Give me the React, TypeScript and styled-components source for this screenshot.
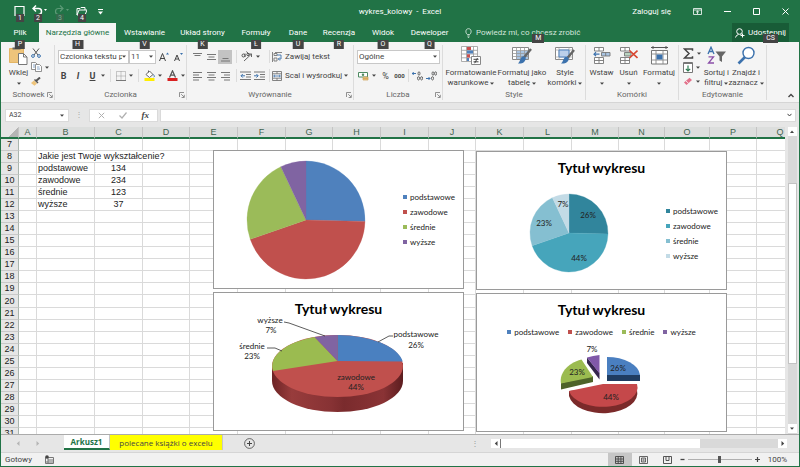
import React from "react";
import styled, { createGlobalStyle, css } from "styled-components";

const UI = 'Roboto, "Open Sans", sans-serif';
const TABS = '"Open Sans", "Noto Sans", sans-serif';
const CHART = 'Lato, "Open Sans", sans-serif';
const GRID = '"Liberation Sans", Arial, sans-serif';
const GREEN = "#217346";

const Global = createGlobalStyle`
  *, *::before, *::after { box-sizing: border-box; }
  body { margin: 0; background: #f1f1f1; }
  button, input, select { font: inherit; color: inherit; margin: 0; }
`;

/* ---------- window ---------- */

const Window = styled.div`
  display: flex;
  flex-direction: column;
  height: 100vh;
  overflow: hidden;
  border: solid ${GREEN};
  border-width: 0 1px 1px;
  background: #f1f1f1;
  color: #444;
  font: 8px/10px ${UI};
`;

const PlainButton = styled.button`
  display: inline-flex;
  align-items: center;
  justify-content: center;
  padding: 0;
  border: 0;
  background: none;
  color: inherit;
  white-space: nowrap;
  svg { flex: none; display: block; }
`;

const TitleBar = styled.header`
  display: grid;
  grid-template-columns: 1fr auto 1fr;
  align-items: center;
  flex: none;
  height: 23px;
  background: ${GREEN};
  color: #fff;
`;

const QuickAccess = styled.div`
  display: flex;
  align-items: center;
  gap: 7px;
  padding-left: 13px;
`;

const QuickButton = styled(PlainButton)<{ $faded?: boolean; $push?: boolean }>`
  position: relative;
  height: 20px;
  margin-left: ${(p) => (p.$push ? 4 : 0)}px;
  color: ${(p) => (p.$faded ? "#5c9a76" : "#fff")};
`;

const KeyTip = styled.span<{ $dim?: boolean }>`
  position: absolute;
  left: 50%;
  bottom: -7px;
  z-index: 2;
  transform: translateX(-50%);
  padding: 0 3px;
  background: ${(p) => (p.$dim ? "#35694c" : "#444")};
  color: ${(p) => (p.$dim ? "#7fa890" : "#fff")};
  font: 7px/9px ${UI};
`;

const QuickTip = styled(KeyTip)`
  left: 6px;
  bottom: 0;
  padding: 0 2px;
  line-height: 8px;
`;

const DocTitle = styled.h1`
  margin: 0;
  font: 8px/12px ${UI};
`;

const WindowTools = styled.div`
  display: flex;
  align-items: center;
  justify-content: flex-end;
  padding-right: 10px;
`;

const SignIn = styled(PlainButton)`
  margin-right: 22px;
`;

const WindowButtons = styled.div`
  display: flex;
  align-items: center;
  gap: 22px;
`;

/* ---------- tab strip ---------- */

const TabStrip = styled.nav`
  display: flex;
  flex: none;
  height: 19px;
  padding-right: 10px;
  background: ${GREEN};
  color: #fff;
`;

const Tab = styled(PlainButton)<{ $w: number; $active?: boolean }>`
  position: relative;
  width: ${(p) => p.$w}px;
  ${(p) =>
    p.$active &&
    css`
      background: #f4f5f4;
      color: ${GREEN};
    `}
`;

const TellMe = styled(PlainButton)`
  position: relative;
  gap: 4px;
  margin-left: 10px;
  color: #d3e5db;
`;

const SideTip = styled(KeyTip)`
  left: auto;
  right: 36px;
  bottom: -1px;
  transform: none;
`;

const Share = styled(PlainButton)`
  position: relative;
  gap: 3px;
  width: 57px;
  margin-left: auto;
  background: #185c37;
`;

const ShareTip = styled(SideTip)`
  right: 11px;
`;

/* ---------- ribbon ---------- */

const Ribbon = styled.section`
  display: flex;
  flex: none;
  height: 61px;
  padding: 3px 0 2px 2px;
  border-bottom: 1px solid #d5d5d5;
  background: #f4f4f4;
`;

const Group = styled.section<{ $w: number }>`
  display: flex;
  flex-direction: column;
  width: ${(p) => p.$w}px;
  border-right: 1px solid #dcdcdc;
`;

const GroupBody = styled.div<{ $gap?: number; $pad?: number }>`
  display: flex;
  flex: 1;
  min-height: 0;
  gap: ${(p) => p.$gap ?? 0}px;
  padding: 0 ${(p) => p.$pad ?? 3}px;
`;

const GroupFoot = styled.footer`
  display: grid;
  grid-template-columns: 9px 1fr 9px;
  align-items: center;
  flex: none;
  height: 11px;
  color: #666;
  text-align: center;
  white-space: nowrap;
`;

const GroupName = styled.span`
  grid-column: 2;
`;

const BigButton = styled(PlainButton)<{ $w: number }>`
  flex-direction: column;
  justify-content: flex-start;
  width: ${(p) => p.$w}px;
  padding-top: 1px;
  line-height: 10px;
  > svg { margin-bottom: 3px; }
`;

const WithArrow = styled.span`
  display: inline-flex;
  align-items: center;
  justify-content: center;
  gap: 2px;
  min-height: 10px;
`;

const Stack = styled.div<{ $w?: number }>`
  display: flex;
  flex-direction: column;
  align-items: flex-start;
  padding-top: 1px;
  width: ${(p) => (p.$w ? `${p.$w}px` : "auto")};
`;

const Line = styled.div<{ $gap?: number }>`
  display: flex;
  align-items: center;
  height: 19px;
  gap: ${(p) => p.$gap ?? 4}px;
`;

const Lines = styled.div`
  display: flex;
  flex-direction: column;
  padding-top: 2px;
`;

const Tool = styled(PlainButton)<{ $on?: boolean; $w?: number }>`
  width: ${(p) => (p.$w ? `${p.$w}px` : "auto")};
  height: 14px;
  gap: 3px;
  background: ${(p) => (p.$on ? "#c3c3c3" : "none")};
`;

const Glyph = styled(Tool)<{ $kind?: "b" | "i" | "u" }>`
  font-size: 9px;
  font-weight: ${(p) => (p.$kind ? 700 : 400)};
  font-style: ${(p) => (p.$kind === "i" ? "italic" : "normal")};
  text-decoration: ${(p) => (p.$kind === "u" ? "underline" : "none")};
`;

const SmallDigits = styled(Glyph)`
  font-size: 6px;
  font-weight: 700;
`;

const Rule = styled.i`
  width: 1px;
  height: 13px;
  background: #dcdcdc;
`;

const PickerBox = styled.label<{ $w: number }>`
  display: flex;
  align-items: center;
  width: ${(p) => p.$w}px;
  height: 14px;
  padding-right: 2px;
  border: 1px solid #c8c8c8;
  background: #fff;
`;

const Picker = styled.select`
  flex: 1;
  min-width: 0;
  height: 12px;
  padding: 0 0 0 1px;
  border: 0;
  background: none;
  appearance: none;
  font-size: 8px;
  line-height: 12px;
`;

const Collapse = styled(PlainButton)`
  align-self: flex-end;
  margin: 0 5px 2px auto;
`;

/* ---------- formula bar ---------- */

const FormulaRow = styled.div`
  display: flex;
  flex: none;
  align-items: center;
  height: 24px;
  padding: 0 3px 0 4px;
  background: #e6e6e6;
`;

const NameBox = styled.label`
  display: flex;
  align-items: center;
  width: 64px;
  height: 13px;
  padding-right: 4px;
  background: #fff;
  border: 1px solid #dadada;
`;

const Field = styled.input`
  flex: 1;
  min-width: 0;
  height: 11px;
  padding: 0 3px;
  border: 0;
  background: none;
  font-size: 7px;
`;

const Dots = styled.span`
  width: 20px;
  color: #a8a8a8;
  text-align: center;
`;

const FormulaTools = styled.div`
  display: flex;
  align-items: center;
  justify-content: space-between;
  width: 69px;
  height: 13px;
  margin-right: 2px;
  padding: 0 8px;
  border: 1px solid #dadada;
  background: #fff;
  color: #b0b0b0;
`;

const Fx = styled(PlainButton)`
  color: #444;
  font: italic 700 9px/11px "Liberation Serif", serif;
`;

const FormulaBox = styled.label`
  display: flex;
  flex: 1;
  align-items: center;
  height: 13px;
  padding-right: 3px;
  border: 1px solid #dadada;
  background: #fff;
`;

/* ---------- sheet ---------- */

const SheetArea = styled.main`
  display: flex;
  flex: 1;
  min-height: 0;
  background: #e6e6e6;
`;

const Canvas = styled.div`
  position: relative;
  flex: 1;
  min-width: 0;
  overflow: hidden;
  background: #fff;
`;

const Grid = styled.table`
  width: 803px;
  table-layout: fixed;
  border-collapse: separate;
  border-spacing: 0;
  font: 9px/11px ${GRID};
  color: #222;
`;

const Col = styled.col<{ $w: number }>`
  width: ${(p) => p.$w}px;
`;

const ColHead = styled.th`
  height: 12px;
  padding: 0;
  border-right: 1px solid #c4c4c4;
  border-bottom: 2px solid ${GREEN};
  background: #dcdedd;
  color: #3f6350;
  font-weight: 400;
  line-height: 10px;
`;

const Corner = styled(ColHead)`
  background: linear-gradient(135deg, #e6e6e6 65%, #b5b5b5 65%);
`;

const Row = styled.tr<{ $h: number }>`
  height: ${(p) => p.$h}px;
`;

const RowHead = styled.th`
  padding: 0;
  border-right: 1px solid #a9b5ae;
  border-bottom: 1px solid #c9c9c9;
  background: #e6e6e6;
  font-weight: 400;
  line-height: 11px;
`;

const Cell = styled.td<{ $center?: boolean }>`
  padding: 0 1px;
  border-right: 1px solid #dadada;
  border-bottom: 1px solid #dadada;
  text-align: ${(p) => (p.$center ? "center" : "left")};
  line-height: 11px;
  white-space: nowrap;
`;

const VScroll = styled.aside`
  display: flex;
  flex-direction: column;
  align-items: center;
  width: 14px;
  padding-bottom: 1px;
  background: linear-gradient(90deg, #e6e6e6 3px, #d9d9d9 3px, #d9d9d9 12px, #e6e6e6 12px);
`;

const ScrollButton = styled(PlainButton)`
  width: 9px;
  height: 9px;
  background: #fff;
`;

const VTrack = styled.div`
  display: flex;
  flex: 1;
  flex-direction: column;
  padding: 47px 0 60px;
`;

const VThumb = styled.div`
  flex: 1;
  width: 9px;
  border: 1px solid #c3c3c3;
  background: #fff;
`;

/* ---------- charts ---------- */

const Chart = styled.figure<{ $x: number; $y: number }>`
  position: absolute;
  left: ${(p) => p.$x}px;
  top: ${(p) => p.$y}px;
  display: flex;
  flex-direction: column;
  width: 251px;
  height: 139px;
  margin: 0;
  border: 1px solid #9a9a9a;
  background: #fff;
  color: #222;
  font: 8px/10px ${CHART};
  text { font: 8px ${CHART}; fill: #222; text-anchor: middle; }
`;

const ChartTitle = styled.h2`
  margin: 0;
  padding-top: 7px;
  color: #000;
  font: 700 14px/18px ${CHART};
  text-align: center;
`;

const ChartBody = styled.div<{ $left: number; $gap: number }>`
  display: flex;
  flex: 1;
  align-items: center;
  gap: ${(p) => p.$gap}px;
  padding-left: ${(p) => p.$left}px;
`;

const Legend = styled.ul<{ $row?: boolean }>`
  display: flex;
  flex-direction: ${(p) => (p.$row ? "row" : "column")};
  justify-content: center;
  gap: ${(p) => (p.$row ? "9px" : "5px")};
  margin: 0;
  padding: ${(p) => (p.$row ? "8px 0 0" : "0")};
  list-style: none;
`;

const LegendItem = styled.li<{ $c: string }>`
  display: flex;
  align-items: center;
  gap: 3px;
  &::before {
    content: "";
    width: 4px;
    height: 4px;
    background: ${(p) => p.$c};
  }
`;

const Drawing = styled.svg`
  display: block;
  flex: none;
  overflow: visible;
`;

/* ---------- bottom bars ---------- */

const SheetTabs = styled.div`
  display: flex;
  flex: none;
  height: 18px;
  border-top: 1px solid #ababab;
  background: #e6e6e6;
`;

const Arrows = styled.div`
  display: flex;
  align-items: center;
  justify-content: space-evenly;
  width: 63px;
  padding-right: 9px;
  color: #b5b5b5;
`;

const SheetTab = styled(PlainButton)<{ $active?: boolean }>`
  height: 15px;
  width: ${(p) => (p.$active ? 46 : 113)}px;
  background: ${(p) => (p.$active ? "#fff" : "#ffff00")};
  color: ${(p) => (p.$active ? GREEN : "#444")};
  font: ${(p) => (p.$active ? 700 : 400)} 8px/10px ${TABS};
  border-bottom: ${(p) => (p.$active ? `2px solid ${GREEN}` : "0")};
  border-right: 1px solid #c6c6c6;
`;

const AddSheet = styled(PlainButton)`
  margin-left: 21px;
  height: 16px;
`;

const HScroll = styled.div`
  display: flex;
  align-items: center;
  flex: none;
  width: 296px;
  height: 9px;
  margin: 4px 12px 0 auto;
  background: #d9d9d9;
`;

const HThumb = styled.div`
  width: 200px;
  height: 9px;
  margin-right: auto;
  border-left: 1px solid #777;
  background: #fff;
`;

const Grip = styled.span`
  width: 20px;
  height: 9px;
  margin: 4px 0 0 auto;
  color: #999;
  line-height: 9px;

  + ${HScroll} {
    margin-left: 0;
  }
`;

const Status = styled.footer`
  display: flex;
  flex: none;
  align-items: center;
  height: 14px;
  padding: 0 12px 0 4px;
  border-top: 1px solid #d5d5d5;
  background: #f1f1f1;
`;

const ViewButton = styled(PlainButton)<{ $on?: boolean }>`
  width: 24px;
  height: 13px;
  background: ${(p) => (p.$on ? "#c6c6c6" : "none")};
`;

const Macro = styled(PlainButton)`
  margin: 0 auto 0 13px;
`;

const Zoom = styled.input`
  width: 64px;
  height: 9px;
  margin: 0 3px;
  appearance: none;
  background: linear-gradient(#b0b0b0, #b0b0b0) center / 100% 1px no-repeat;
  &::-webkit-slider-thumb {
    appearance: none;
    width: 3px;
    height: 7px;
    background: #555;
  }
`;

const Percent = styled.output`
  margin-left: 8px;
`;

/* ---------- icons ---------- */

type IconProps = { w: number; h: number; children: React.ReactNode };
const Icon = ({ w, h, children }: IconProps) => (
  <svg width={w} height={h} viewBox={`0 0 ${w} ${h}`} fill="none" stroke="currentColor" aria-hidden="true">
    {children}
  </svg>
);

const Caret = ({ up = false }: { up?: boolean }) => (
  <Icon w={4} h={3}>
    <path d={up ? "M0 3 2 0.5 4 3z" : "M0 0.5h4L2 2.8z"} fill="currentColor" stroke="none" />
  </Icon>
);

const Side = ({ left = false }: { left?: boolean }) => (
  <Icon w={4} h={5}>
    <path d={left ? "M3.5 0v5L0.8 2.5z" : "M0.5 0v5l2.7-2.5z"} fill="currentColor" stroke="none" />
  </Icon>
);

const AlignIcon = ({ kind }: { kind: "top" | "middle" | "bottom" | "left" | "center" | "right" }) => {
  const rows: Record<string, string> = {
    top: "M0 1.5h9M1.5 3.5h6",
    middle: "M0 2.5h9M1.5 5h6M0 7.5h9",
    bottom: "M1.5 6.5h6M0 9h9",
    left: "M0 1.5h9M0 4h6M0 6.5h9M0 9h6",
    center: "M0 1.5h9M1.5 4h6M0 6.5h9M1.5 9h6",
    right: "M0 1.5h9M3 4h6M0 6.5h9M3 9h6",
  };
  return (
    <Icon w={9} h={10}>
      <path d={rows[kind]} stroke="#777" />
    </Icon>
  );
};

const IndentIcon = ({ out = false }: { out?: boolean }) => (
  <Icon w={11} h={10}>
    <path d="M0 1h11M6 3.5h5M6 6h5M0 8.5h11" stroke="#777" />
    <path d={out ? "M5 4.8H1M2.8 3 1 4.8l1.8 1.8" : "M0 4.8h4M2.4 3l1.8 1.8-1.8 1.8"} stroke="#3c72ad" />
  </Icon>
);

const LauncherIcon = () => (
  <Icon w={6} h={6}>
    <path d="M0.5 5V0.5H5M2.2 2.2 5 5M5.3 2.8v2.7H2.6" stroke="#777" strokeWidth="0.8" />
  </Icon>
);

const PasteIcon = () => (
  <Icon w={19} h={19}>
    <path d="M0.5 2.5h14v14H.5z" fill="#eec47b" stroke="#e3b564" />
    <path d="M3.5 3.5v-2H6a1.500 1.500 0 0 1 3 0h2.500v2z" fill="#666" stroke="none" />
    <path d="M9.500 7.500h5l3.500 3.500v7.500H9.500z" fill="#fff" stroke="#777" />
    <path d="M14.500 7.500V11H18" stroke="#777" />
  </Icon>
);

const CutIcon = () => (
  <Icon w={10} h={10}>
    <path d="M2 0.5 7 7M8 0.500 3 7" stroke="#555" />
    <circle cx="2" cy="8" r="1.400" stroke="#3c72ad" />
    <circle cx="8" cy="8" r="1.400" stroke="#3c72ad" />
  </Icon>
);

const CopyIcon = () => (
  <Icon w={11} h={10}>
    <path d="M.5.5h4l2 2v5h-6z" fill="#fff" stroke="#777" strokeWidth="0.8" />
    <path d="M4.500 2.500h4l2 2v5h-6z" fill="#fff" stroke="#777" strokeWidth="0.8" />
    <path d="M2 3h2M2 5h2M6 5h2.500M6 7h3" stroke="#6a91bd" strokeWidth="0.8" />
  </Icon>
);

const BrushIcon = () => (
  <Icon w={10} h={9}>
    <path d="M5 4 9 0.500" stroke="#555" strokeWidth="2" />
    <path d="M3.500 2.500 7 6" stroke="#555" strokeWidth="1.500" />
    <path d="M3 3.500 6 6.500 3.500 8.800 0 6z" fill="#eec47b" stroke="none" />
  </Icon>
);

const BorderIcon = () => (
  <Icon w={10} h={10}>
    <path d="M.5.5h9v9h-9zM5 .5v9M.5 5h9" stroke="#999" strokeDasharray="1 1" />
    <path d="M0 9.500h10" stroke="#777" />
  </Icon>
);

const FillIcon = () => (
  <Icon w={11} h={11}>
    <path d="M2 4.500 5.500 1 9 4.500 5.500 7.500zM4.500 2.500V.5" fill="#fff" stroke="#555" strokeWidth="0.9" />
    <path d="M9.500 4.500c1 1.500 1 2.500.3 2.800" stroke="#3c72ad" />
    <path d="M.5 9.500h10" stroke="#ffee00" strokeWidth="3" />
  </Icon>
);

const FontColorIcon = () => (
  <Icon w={11} h={11}>
    <path d="M2.500 7.500 5.500.8 8.500 7.500M3.600 5.200h3.800" stroke="#555" strokeWidth="1.200" />
    <path d="M.5 9.500h10" stroke="#d92121" strokeWidth="3" />
  </Icon>
);

const OrientIcon = () => (
  <Icon w={12} h={11}>
    <path d="M3 10 10.500 3M10.500 6V3h-3" stroke="#666" />
    <circle cx="2.500" cy="4.500" r="1.500" stroke="#555" />
    <path d="M4 2.500v3.500M5.500.5 8 3.500" stroke="#555" />
    <circle cx="7" cy="3.500" r="1.200" stroke="#555" />
  </Icon>
);

const WrapIcon = () => (
  <Icon w={10} h={10}>
    <path d="M.5 0v10M3 .5h7M2 1.500h3v2H2zM2 6h3v3H2z" stroke="#777" strokeWidth="0.9" />
    <path d="M5 3h4v4H6.500M7.800 5.500 6.300 7l1.500 1.500" stroke="#3c72ad" strokeWidth="0.9" />
  </Icon>
);

const MergeIcon = () => (
  <Icon w={10} h={10}>
    <path d="M.5.5h9v9h-9zM.5 2.800h9M.5 7.200h9M5 .5v2.300M5 7.200v2.300" stroke="#777" strokeWidth="0.9" />
    <path d="M1.500 5h7M3 3.800 1.700 5 3 6.200M7 3.800 8.300 5 7 6.200" stroke="#3c72ad" strokeWidth="0.8" />
  </Icon>
);

const MoneyIcon = () => (
  <Icon w={11} h={10}>
    <path d="M.5 1.500h9v4.500h-9z" fill="#fff" stroke="#4f8b62" />
    <circle cx="5" cy="3.800" r="1.200" fill="#4f8b62" stroke="none" />
    <path d="M5 6h5v3H5z" fill="#eec47b" stroke="#caa256" strokeWidth="0.7" />
    <path d="M5 7.500h5" stroke="#caa256" strokeWidth="0.7" />
  </Icon>
);

const DecimalIcon = ({ more = false }: { more?: boolean }) => (
  <Icon w={11} h={10}>
    <path d={more ? "M0 2.500h4M1.700 1 .3 2.500 1.700 4" : "M0 7.500h4M2.500 6 4 7.500 2.500 9"} stroke="#3c72ad" />
    <ellipse cx="7" cy="2.500" rx="1" ry="1.700" stroke="#666" />
    <ellipse cx="9.600" cy={more ? 7.300 : 2.500} rx="1" ry="1.700" stroke="#666" />
    <ellipse cx="6.500" cy="7.300" rx="1" ry="1.700" stroke="#666" />
  </Icon>
);

const ConditionalIcon = () => (
  <Icon w={20} h={19}>
    <path d="M.5.5h16v15H.5zM.5 4.300h16M.5 8h16M.5 11.800h16M5.500.5v15M12.500.5v15" fill="#fff" stroke="#999" strokeWidth="0.8" />
    <path d="M6 1h4v3H6zM6 8.300h3v3.200H6z" fill="#c94f4f" stroke="none" />
    <path d="M6 4.600h6v3H6zM6 12h2v3H6z" fill="#4f81bd" stroke="none" />
    <path d="M10.500 10.500h9v8h-9z" fill="#fff" stroke="#888" />
    <path d="M12.500 13.300h5M12.500 15.800h5M16.500 12 13.700 17.200" stroke="#444" />
  </Icon>
);

const TableIcon = () => (
  <Icon w={20} h={19}>
    <path d="M.5 1.500h16v12H.5z" fill="#fff" stroke="#888" />
    <path d="M4 5h12v8H4z" fill="#a9c4e2" stroke="none" />
    <path d="M.5 4.500h16M.5 7.500h16M.5 10.500h16M4.500 1.500v12M8.500 1.500v12M12.500 1.500v12" stroke="#999" strokeWidth="0.8" />
    <path d="M19 3 12 11.500" stroke="#666" strokeWidth="2.400" />
    <path d="M12.500 10.500c2 1 1.500 4-1 6-2 1.500-4 .8-5.500 1 2-1.500 2-5 4-7z" fill="#3c72ad" stroke="none" />
  </Icon>
);

const StylesIcon = () => (
  <Icon w={20} h={19}>
    <path d="M.5 1.500h17v12H.5z" fill="#fff" stroke="#888" />
    <path d="M.5 4h17M.5 11h17M4 1.500v12M14 1.500v12" stroke="#aaa" strokeWidth="0.8" />
    <path d="M4 4h10v7H4z" fill="#bcd0ea" stroke="#4f81bd" />
    <path d="M19 4 12.500 12" stroke="#666" strokeWidth="2.400" />
    <path d="M12.500 11c2 1 1.500 4-1 5.500-2 1.500-4 .8-5.500 1 2-1.500 2-4.500 4-6.500z" fill="#3c72ad" stroke="none" />
  </Icon>
);

const InsertIcon = () => (
  <Icon w={18} h={19}>
    <path d="M1.500 1.500h9v3.500h-9zM6 1.500V5M1.500 11.500h9v6h-9zM6 11.500v6M1.500 14.500h9" fill="#fff" stroke="#777" strokeWidth="0.9" />
    <path d="M8.500 6.500h8.500v3.500H8.500zM12.700 6.500V10" fill="#a9c4e2" stroke="#777" strokeWidth="0.9" />
    <path d="M6.500 8.200H1M3 6.200 1 8.200l2 2" stroke="#3c72ad" strokeWidth="1.200" />
  </Icon>
);

const DeleteIcon = () => (
  <Icon w={18} h={19}>
    <path d="M.5 1.500h9v3.500h-9zM5 1.500V5M.5 11.500h9v6h-9zM5 11.500v6M.5 14.500h9" fill="#fff" stroke="#777" strokeWidth="0.9" />
    <path d="M4.500 6.500H11v3.500H4.500z" fill="#b9d4c0" stroke="#777" strokeWidth="0.9" />
    <path d="M9.500 4.500 17.500 12M17.500 4.500 9.500 12" stroke="#d8452f" strokeWidth="1.700" />
  </Icon>
);

const FormatIcon = () => (
  <Icon w={19} h={19}>
    <path d="M1 1.500h17M3 0v3M16 0v3" stroke="#555" />
    <path d="M1.500 4.500h16v13.500H1.500z" fill="#fff" stroke="#777" />
    <path d="M1.500 8h16M1.500 14h16M6 4.500V18M13 4.500V18" stroke="#888" strokeWidth="0.9" />
    <path d="M6.500 8.500H12.500V13.500H6.500z" fill="#3c72ad" stroke="none" />
  </Icon>
);

const SumIcon = () => (
  <Icon w={11} h={11}>
    <path d="M9.500 2.800V1H1.500L6 5.500 1.500 10h8V8.200" stroke="#444" strokeWidth="1.500" />
  </Icon>
);

const FillDownIcon = () => (
  <Icon w={10} h={11}>
    <path d="M.5.5h9v10h-9z" fill="#fff" stroke="#777" />
    <path d="M.5 1.500h9" stroke="#777" />
    <path d="M5 3.500V9M2.800 6.800 5 9l2.200-2.200" stroke="#2b7a50" strokeWidth="1.200" />
  </Icon>
);

const EraserIcon = () => (
  <Icon w={10} h={9}>
    <path d="M1 5.500 6.500.8 9 3 3.500 8z" fill="#e2728b" stroke="none" />
    <path d="M3 4 5.500 6.300" stroke="#fff" strokeWidth="0.8" />
  </Icon>
);

const SortIcon = () => (
  <Icon w={19} h={19}>
    <path d="M1 8 4 1.200 7 8M2.200 5.500h3.700" stroke="#3c72ad" strokeWidth="1.300" />
    <path d="M1.500 10.800h5L1.500 17h5.500" stroke="#8a4fa8" strokeWidth="1.300" />
    <path d="M8.500 5.500H19L15 10.500v5.500l-2.500-1.500v-4z" fill="#666" stroke="none" />
  </Icon>
);

const FindIcon = () => (
  <Icon w={19} h={19}>
    <path d="M8 11 1.500 17.500" stroke="#3c72ad" strokeWidth="2.600" />
    <circle cx="11.500" cy="7" r="5.500" fill="#fff" stroke="#3c72ad" strokeWidth="1.400" />
  </Icon>
);

const drop = (text: string) => (
  <WithArrow>
    {text}
    <Caret />
  </WithArrow>
);

/* ---------- data ---------- */

const tabs: [string, string, number, boolean?][] = [
  ["Plik", "P", 38],
  ["Narzędzia główne", "H", 77, true],
  ["Wstawianie", "V", 57],
  ["Układ strony", "K", 59],
  ["Formuły", "Ł", 48],
  ["Dane", "U", 36],
  ["Recenzja", "R", 46],
  ["Widok", "O", 42],
  ["Deweloper", "Q", 51],
];

const columns: [string, number][] = [
  ["A", 18], ["B", 58], ["C", 48], ["D", 47], ["E", 48], ["F", 48], ["G", 47], ["H", 48], ["I", 48],
  ["J", 47], ["K", 48], ["L", 48], ["M", 47], ["N", 46], ["O", 45], ["P", 47], ["Q", 47],
];

const cells: Record<string, string> = {
  B8: "Jakie jest Twoje wykształcenie?",
  B9: "podstawowe", C9: "134",
  B10: "zawodowe", C10: "234",
  B11: "średnie", C11: "123",
  B12: "wyższe", C12: "37",
};

const spans: Record<string, number> = { B8: 3 };
const covered = new Set(["C8", "D8"]);

const names = ["podstawowe", "zawodowe", "średnie", "wyższe"];
const values = [134, 234, 123, 37];
const office = ["#4f81bd", "#c0504d", "#9bbb59", "#8064a2"];
const teal = ["#31859c", "#46a5bb", "#85bfd1", "#c3dbe6"];

const LegendList = ({ colors, row }: { colors: string[]; row?: boolean }) => (
  <Legend $row={row}>
    {names.map((n, i) => (
      <LegendItem key={n} $c={colors[i]}>{n}</LegendItem>
    ))}
  </Legend>
);

const Pie = ({ r, colors, labels }: { r: number; colors: string[]; labels?: [string, number, number][] }) => {
  const total = values.reduce((a, b) => a + b, 0);
  let sum = 0;
  const point = (v: number) => {
    const a = (v / total) * Math.PI * 2;
    return `${r + r * Math.sin(a)} ${r - r * Math.cos(a)}`;
  };
  return (
    <Drawing width={2 * r} height={2 * r} viewBox={`0 0 ${2 * r} ${2 * r}`}>
      {values.map((v, i) => {
        const from = point(sum);
        sum += v;
        return (
          <path
            key={i}
            d={`M${r} ${r}L${from}A${r} ${r} 0 ${v > total / 2 ? 1 : 0} 1 ${point(sum)}Z`}
            fill={colors[i]}
            stroke={colors[i]}
            strokeWidth="0.3"
          />
        );
      })}
      {labels?.map(([t, x, y]) => (
        <text key={t} x={x} y={y}>{t}</text>
      ))}
    </Drawing>
  );
};

const Pie3D = () => (
  <Drawing width="249" height="112" viewBox="214 318 249 112">
    <defs>
      <linearGradient id="rim" x1="0" x2="1">
        <stop offset="0" stopColor="#6d2325" />
        <stop offset="0.15" stopColor="#983c3c" />
        <stop offset="0.45" stopColor="#873234" />
        <stop offset="0.55" stopColor="#7a2b2d" />
        <stop offset="0.85" stopColor="#8a3335" />
        <stop offset="1" stopColor="#5c1d1f" />
      </linearGradient>
    </defs>
    <path d="M272 366V381A65.500 31 0 0 0 403 381V363z" fill="url(#rim)" />
    <ellipse cx="337.500" cy="366" rx="65.500" ry="31" fill="#c0504d" />
    <path d="M337.500 361V335A65.500 31 0 0 1 402.700 361.500z" fill="#4a80c0" />
    <path d="M337.500 361 273 371A65.500 31 0 0 1 314.500 337z" fill="#9bbb50" />
    <path d="M337.500 361 314.500 337A65.500 31 0 0 1 337.500 335z" fill="#8064a2" />
    <path d="M284 322l5 1 36 13M267 348h8l7 3M393 336h-4l-11 6" fill="none" stroke="#333" strokeWidth="0.8" />
    <text x="270" y="323">wyższe</text>
    <text x="271" y="333">7%</text>
    <text x="252" y="349">średnie</text>
    <text x="252" y="359">23%</text>
    <text x="416" y="337">podstawowe</text>
    <text x="416" y="348">26%</text>
    <text x="356" y="380">zawodowe</text>
    <text x="356" y="390">44%</text>
  </Drawing>
);

const Exploded = () => (
  <Drawing width="249" height="92" viewBox="477 337 249 92">
    <path d="M607 375h33v6h-33z" fill="#1f3c61" />
    <path d="M607 375V357A33 19 0 0 1 640 375z" fill="#4a7fc0" />
    <path d="M569 391V396A34 20 0 0 0 637 390V384z" fill="#7b2a2a" />
    <path d="M603 384H637A34 19 0 0 1 569 391z" fill="#c5484a" />
    <path d="M561 383 593 376v6l-32 7.500z" fill="#4d6329" />
    <path d="M593 377 561 383.500C559 374 567 363 581.500 359.500z" fill="#9bbb50" />
    <path d="M587 357.500 599.500 373v6.500L587 363z" fill="#35264d" />
    <path d="M599.500 373.500 587 357.500Q593 355.500 599.500 355z" fill="#8058a8" />
    <text x="592" y="352">7%</text>
    <text x="618" y="371">26%</text>
    <text x="577" y="375">23%</text>
    <text x="611" y="400">44%</text>
  </Drawing>
);

/* ---------- page ---------- */

const Foot = ({ name, launch }: { name: string; launch?: boolean }) => (
  <GroupFoot>
    <GroupName>{name}</GroupName>
    {launch && <PlainButton aria-label={`${name}: opcje`}><LauncherIcon /></PlainButton>}
  </GroupFoot>
);

const RibbonBar = () => (
  <Ribbon>
    <Group $w={52}>
      <GroupBody>
        <BigButton $w={25}>
          <PasteIcon />
          Wklej
          {drop("")}
        </BigButton>
        <Stack>
          <Tool $w={10} aria-label="Wytnij"><CutIcon /></Tool>
          <Tool aria-label="Kopiuj"><CopyIcon /><Caret /></Tool>
          <Tool $w={10} aria-label="Malarz formatów"><BrushIcon /></Tool>
        </Stack>
      </GroupBody>
      <Foot name="Schowek" launch />
    </Group>

    <Group $w={132}>
      <GroupBody>
        <Lines>
          <Line $gap={0}>
            <PickerBox $w={71}>
              <Picker aria-label="Czcionka"><option>Czcionka tekstu p</option></Picker>
              <Caret />
            </PickerBox>
            <PickerBox $w={27}>
              <Picker aria-label="Rozmiar"><option>11</option></Picker>
              <Caret />
            </PickerBox>
            <Glyph $w={16} aria-label="Zwiększ rozmiar">
              <Icon w={10} h={10}><path d="M.5 9 3.500 1.500 6.500 9M1.600 6.500h3.800" /><path d="M7 2.500 8.500.5 10 2.500z" fill="#3c72ad" stroke="none" /></Icon>
            </Glyph>
            <Glyph $w={13} aria-label="Zmniejsz rozmiar">
              <Icon w={9} h={10}><path d="M.5 9 3 3 5.500 9M1.400 7h3.200" /><path d="M6 1h3L7.500 3z" fill="#3c72ad" stroke="none" /></Icon>
            </Glyph>
          </Line>
          <Line $gap={5}>
            <Glyph $w={11} $kind="b">B</Glyph>
            <Glyph $w={8} $kind="i">I</Glyph>
            <Tool><Glyph as="span" $kind="u" $w={11}>U</Glyph><Caret /></Tool>
            <Rule />
            <Tool aria-label="Obramowanie"><BorderIcon /><Caret /></Tool>
            <Rule />
            <Tool aria-label="Wypełnienie"><FillIcon /><Caret /></Tool>
            <Tool aria-label="Kolor czcionki"><FontColorIcon /><Caret /></Tool>
          </Line>
        </Lines>
      </GroupBody>
      <Foot name="Czcionka" launch />
    </Group>

    <Group $w={167}>
      <GroupBody $gap={4}>
        <Lines>
          <Line $gap={0}>
            <Tool $w={14} aria-label="Do góry"><AlignIcon kind="top" /></Tool>
            <Tool $w={14} aria-label="Środek"><AlignIcon kind="middle" /></Tool>
            <Tool $w={14} $on aria-label="Do dołu"><AlignIcon kind="bottom" /></Tool>
          </Line>
          <Line $gap={0}>
            <Tool $w={14} aria-label="Do lewej"><AlignIcon kind="left" /></Tool>
            <Tool $w={14} aria-label="Wyśrodkuj"><AlignIcon kind="center" /></Tool>
            <Tool $w={14} aria-label="Do prawej"><AlignIcon kind="right" /></Tool>
          </Line>
        </Lines>
        <Lines>
          <Line>
            <Rule />
            <Tool aria-label="Orientacja"><OrientIcon /><Caret /></Tool>
          </Line>
          <Line $gap={3}>
            <Rule />
            <Tool aria-label="Zmniejsz wcięcie"><IndentIcon out /></Tool>
            <Tool aria-label="Zwiększ wcięcie"><IndentIcon /></Tool>
          </Line>
        </Lines>
        <Lines>
          <Line $gap={2}><Rule /><Tool><WrapIcon />Zawijaj tekst</Tool></Line>
          <Line $gap={2}><Rule /><Tool><MergeIcon />Scal i wyśrodkuj</Tool>{drop("")}</Line>
        </Lines>
      </GroupBody>
      <Foot name="Wyrównanie" launch />
    </Group>

    <Group $w={89}>
      <GroupBody>
        <Lines>
          <Line>
            <PickerBox $w={83}>
              <Picker aria-label="Format liczb"><option>Ogólne</option></Picker>
              <Caret />
            </PickerBox>
          </Line>
          <Line $gap={3}>
            <Tool $w={20} aria-label="Waluta"><MoneyIcon /><Caret /></Tool>
            <Glyph $w={11}>%</Glyph>
            <SmallDigits $w={11}>000</SmallDigits>
            <Rule />
            <Tool aria-label="Więcej miejsc"><DecimalIcon more /></Tool>
            <Tool aria-label="Mniej miejsc"><DecimalIcon /></Tool>
          </Line>
        </Lines>
      </GroupBody>
      <Foot name="Liczba" launch />
    </Group>

    <Group $w={143}>
      <GroupBody $pad={2}>
        <BigButton $w={52}><ConditionalIcon />Formatowanie{drop("warunkowe")}</BigButton>
        <BigButton $w={50}><TableIcon />Formatuj jako{drop("tabelę")}</BigButton>
        <BigButton $w={36}><StylesIcon />Style{drop("komórki")}</BigButton>
      </GroupBody>
      <Foot name="Style" />
    </Group>

    <Group $w={93}>
      <GroupBody $pad={2}>
        <BigButton $w={27}><InsertIcon />Wstaw{drop("")}</BigButton>
        <BigButton $w={27}><DeleteIcon />Usuń{drop("")}</BigButton>
        <BigButton $w={34}><FormatIcon />Formatuj{drop("")}</BigButton>
      </GroupBody>
      <Foot name="Komórki" />
    </Group>

    <Group $w={88}>
      <GroupBody $pad={4}>
        <Stack $w={20}>
          <Tool aria-label="Suma"><SumIcon /><Caret /></Tool>
          <Tool aria-label="Wypełnij"><FillDownIcon /><Caret /></Tool>
          <Tool aria-label="Wyczyść"><EraserIcon /><Caret /></Tool>
        </Stack>
        <BigButton $w={28}><SortIcon />Sortuj i{drop("filtruj")}</BigButton>
        <BigButton $w={32}><FindIcon />Znajdź i{drop("zaznacz")}</BigButton>
      </GroupBody>
      <Foot name="Edytowanie" />
    </Group>
    <Collapse aria-label="Zwiń wstążkę"><Icon w={6} h={5}><path d="M.5 4 3 1.500 5.500 4" strokeWidth="1.400" /></Icon></Collapse>
  </Ribbon>
);

export default function App() {
  const rows = Array.from({ length: 25 }, (_, i) => i + 7);
  return (
    <Window>
      <Global />
      <TitleBar>
        <QuickAccess>
          <QuickButton aria-label="Zapisz">
            <Icon w={11} h={13}><path d="M1 11V1.500h9V11" strokeWidth="1.200" /></Icon>
            <QuickTip>1</QuickTip>
          </QuickButton>
          <QuickButton aria-label="Cofnij">
            <Icon w={15} h={13}>
              <path d="M1 3.500h5.500a3 3 0 0 1 0 6M4 .5l-3 3 3 3" strokeWidth="1.500" />
              <path d="M12 4h3l-1.500 2z" fill="currentColor" stroke="none" />
            </Icon>
            <QuickTip>2</QuickTip>
          </QuickButton>
          <QuickButton $faded aria-label="Ponów">
            <Icon w={15} h={13}>
              <path d="M9 3.500H4.500a3 3 0 0 0 0 6M6 .5l3 3-3 3" strokeWidth="1.200" />
              <path d="M12 4h3l-1.500 2z" fill="currentColor" stroke="none" />
            </Icon>
            <QuickTip $dim>3</QuickTip>
          </QuickButton>
          <QuickButton aria-label="Otwórz">
            <Icon w={11} h={13}><path d="M1 10V3.500h3l1-1h4v2.500M1 10l2-5h8l-2 5z" /></Icon>
            <QuickTip>4</QuickTip>
          </QuickButton>
          <QuickButton $push aria-label="Dostosuj">
            <Icon w={5} h={6}><path d="M0 .5h5" /><path d="M0 2.500h5L2.500 5.500z" fill="currentColor" stroke="none" /></Icon>
          </QuickButton>
        </QuickAccess>
        <DocTitle>wykres_kolowy&nbsp; - &nbsp;Excel</DocTitle>
        <WindowTools>
          <SignIn>Zaloguj się</SignIn>
          <WindowButtons>
            <PlainButton aria-label="Opcje wstążki"><Icon w={9} h={7}><path d="M.5.500h8v6h-8zM.5 2h8M4.500 6V3M3 4.300l1.500-1.300L6 4.300" strokeWidth="0.8" /></Icon></PlainButton>
            <PlainButton aria-label="Minimalizuj"><Icon w={7} h={7}><path d="M0 3.500h7" /></Icon></PlainButton>
            <PlainButton aria-label="Maksymalizuj"><Icon w={7} h={7}><path d="M.5.500h6v6h-6z" /></Icon></PlainButton>
            <PlainButton aria-label="Zamknij"><Icon w={7} h={7}><path d="M.5.500l6 6M6.500.500l-6 6" /></Icon></PlainButton>
          </WindowButtons>
        </WindowTools>
      </TitleBar>

      <TabStrip>
        {tabs.map(([name, key, w, active]) => (
          <Tab key={name} $w={w} $active={active}>{name}<KeyTip>{key}</KeyTip></Tab>
        ))}
        <TellMe>
          <Icon w={7} h={10}><path d="M2.300 6.500C.2 4.800.3.700 3.500.700s3.300 4.100 1.200 5.800zM2.300 8h2.400M2.800 9.400h1.400" strokeWidth="0.9" /></Icon>
          Powiedz mi, co chcesz zrobić
          <SideTip>M</SideTip>
        </TellMe>
        <Share>
          <Icon w={10} h={10}><circle cx="4.500" cy="3.500" r="2.800" /><path d="M.5 9.500Q1 7 3.500 6.500M5.500 6.500 7 7.500M7.500 5.500v4M5.500 7.500h4" /></Icon>
          Udostępnij
          <ShareTip>CS</ShareTip>
        </Share>
      </TabStrip>

      <RibbonBar />

      <FormulaRow>
        <NameBox><Field aria-label="Pole nazwy" defaultValue="A32" /><Caret /></NameBox>
        <Dots>⋮</Dots>
        <FormulaTools>
          <PlainButton aria-label="Anuluj"><Icon w={7} h={7}><path d="M.8.800l5.400 5.400M6.200.800.8 6.200" /></Icon></PlainButton>
          <PlainButton aria-label="Wpis"><Icon w={8} h={7}><path d="M.5 3.500 3 6 7.500.5" strokeWidth="1.200" /></Icon></PlainButton>
          <Fx>fx</Fx>
        </FormulaTools>
        <FormulaBox>
          <Field aria-label="Pasek formuły" />
          <Icon w={5} h={4}><path d="M.5.800 2.500 3 4.500.800" /></Icon>
        </FormulaBox>
      </FormulaRow>

      <SheetArea>
        <Canvas>
          <Grid>
            <colgroup>
              <Col $w={18} />
              {columns.map(([c, w]) => <Col key={c} $w={w} />)}
            </colgroup>
            <thead>
              <tr>
                <Corner aria-label="Zaznacz wszystko" />
                {columns.map(([c]) => <ColHead key={c} scope="col">{c}</ColHead>)}
              </tr>
            </thead>
            <tbody>
              {rows.map((r) => (
                <Row key={r} $h={r === 20 ? 13 : 12}>
                  <RowHead scope="row">{r}</RowHead>
                  {columns
                    .filter(([c]) => !covered.has(c + r))
                    .map(([c]) => (
                      <Cell key={c} colSpan={spans[c + r]} $center={c === "C"}>{cells[c + r]}</Cell>
                    ))}
                </Row>
              ))}
            </tbody>
          </Grid>

          <Chart $x={212} $y={23}>
            <ChartBody $left={33} $gap={38}>
              <Pie r={59} colors={office} />
              <LegendList colors={office} />
            </ChartBody>
          </Chart>
          <Chart $x={475} $y={24}>
            <ChartTitle>Tytuł wykresu</ChartTitle>
            <ChartBody $left={53} $gap={58}>
              <Pie r={39} colors={teal} labels={[["26%", 58, 24], ["44%", 49, 67], ["23%", 14, 32], ["7%", 33, 13]]} />
              <LegendList colors={teal} />
            </ChartBody>
          </Chart>
          <Chart $x={212} $y={165}>
            <ChartTitle>Tytuł wykresu</ChartTitle>
            <Pie3D />
          </Chart>
          <Chart $x={475} $y={166}>
            <ChartTitle>Tytuł wykresu</ChartTitle>
            <LegendList row colors={office} />
            <Exploded />
          </Chart>
        </Canvas>
        <VScroll>
          <ScrollButton aria-label="W górę"><Caret up /></ScrollButton>
          <VTrack><VThumb /></VTrack>
          <ScrollButton aria-label="W dół"><Caret /></ScrollButton>
        </VScroll>
      </SheetArea>

      <SheetTabs>
        <Arrows>
          <PlainButton aria-label="Poprzedni arkusz"><Side left /></PlainButton>
          <PlainButton aria-label="Następny arkusz"><Side /></PlainButton>
        </Arrows>
        <SheetTab $active>Arkusz1</SheetTab>
        <SheetTab>polecane książki o excelu</SheetTab>
        <AddSheet aria-label="Nowy arkusz"><Icon w={11} h={11}><circle cx="5.500" cy="5.500" r="4.900" strokeWidth="0.8" /><path d="M5.500 3v5M3 5.500h5" /></Icon></AddSheet>
        <Grip>⋮</Grip>
        <HScroll>
          <ScrollButton aria-label="W lewo"><Side left /></ScrollButton>
          <HThumb />
          <ScrollButton aria-label="W prawo"><Side /></ScrollButton>
        </HScroll>
      </SheetTabs>

      <Status>
        Gotowy
        <Macro aria-label="Nagraj makro"><Icon w={9} h={9}><path d="M.5 2.500h8v6h-8zM3 5h5M.5 7h8M3 2.500v6" stroke="#777" /><circle cx="2" cy="2" r="1.800" fill="#444" stroke="none" /></Icon></Macro>
        <ViewButton $on aria-label="Normalny"><Icon w={9} h={8}><path d="M.5.500h8v7h-8zM.5 3h8M.5 5.300h8M3.200.5v7M5.900.5v7" strokeWidth="0.9" /></Icon></ViewButton>
        <ViewButton aria-label="Układ strony"><Icon w={9} h={8}><path d="M.5.500h8v7h-8zM2.500 2h4v4h-4zM3.500 3.200h2M3.500 4.800h2" strokeWidth="0.8" /></Icon></ViewButton>
        <ViewButton aria-label="Podgląd podziału"><Icon w={9} h={8}><path d="M.5.500h8v7h-8zM3 .5v4h3v-4" strokeWidth="0.9" /></Icon></ViewButton>
        <PlainButton aria-label="Pomniejsz"><Icon w={5} h={5}><path d="M.5 2.500h4" strokeWidth="1.300" /></Icon></PlainButton>
        <Zoom type="range" aria-label="Powiększenie" min={10} max={190} defaultValue={100} />
        <PlainButton aria-label="Powiększ"><Icon w={5} h={5}><path d="M0 2.500h5M2.500 0v5" strokeWidth="1.200" /></Icon></PlainButton>
        <Percent>100%</Percent>
      </Status>
    </Window>
  );
}
